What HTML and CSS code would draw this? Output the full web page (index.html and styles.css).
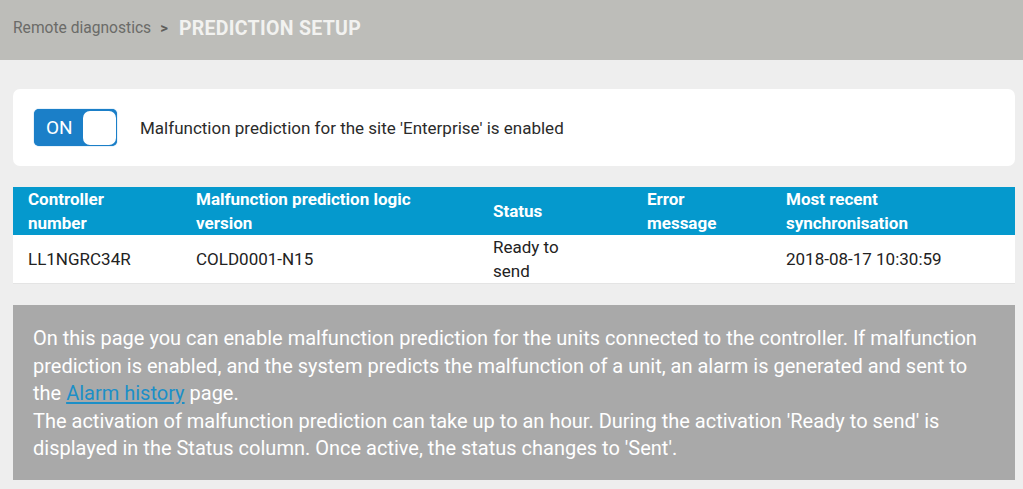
FILE: index.html
```html
<!DOCTYPE html>
<html>
<head>
<meta charset="utf-8">
<link rel="stylesheet" href="styles.css">
</head>
<body>
<header class="topbar">
  <span class="crumb">Remote diagnostics</span>
  <span class="sep">&gt;</span>
  <span class="title">PREDICTION SETUP</span>
</header>
<main class="content">
  <section class="card">
    <div class="toggle">
      <span class="toggle-label">ON</span>
      <span class="knob"></span>
    </div>
    <span class="card-text">Malfunction prediction for the site 'Enterprise' is enabled</span>
  </section>
  <table class="grid">
    <thead>
      <tr>
        <th class="c1">Controller<br>number</th>
        <th class="c2">Malfunction prediction logic<br>version</th>
        <th class="c3">Status</th>
        <th class="c4">Error<br>message</th>
        <th class="c5">Most recent<br>synchronisation</th>
      </tr>
    </thead>
    <tbody>
      <tr>
        <td>LL1NGRC34R</td>
        <td>COLD0001-N15</td>
        <td>Ready to<br>send</td>
        <td></td>
        <td>2018-08-17 10:30:59</td>
      </tr>
    </tbody>
  </table>
  <section class="info">
    <p>On this page you can enable malfunction prediction for the units connected to the controller. If malfunction prediction is enabled, and the system predicts the malfunction of a unit, an alarm is generated and sent to the <a href="#">Alarm history</a> page.<br>The activation of malfunction prediction can take up to an hour. During the activation 'Ready to send' is displayed in the Status column. Once active, the status changes to 'Sent'.</p>
  </section>
</main>
</body>
</html>
```
FILE: styles.css
```css
* { box-sizing: border-box; }
html, body { margin: 0; padding: 0; }
body {
  background: #eeeeee;
  font-family: Roboto, "Liberation Sans", sans-serif;
  color: #333;
  width: 1023px;
  height: 489px;
  overflow: hidden;
}
.topbar {
  height: 60px;
  background: #bdbdb9;
  display: flex;
  align-items: center;
  padding-left: 13px;
  padding-bottom: 4px;
}
.crumb { font-size: 15.6px; color: #6b6b68; }
.sep { font-size: 15px; font-weight: 700; color: #5e5e5b; margin: 0 11px 0 9px; }
.title { font-size: 19.5px; font-weight: 700; color: #f2f2f0; letter-spacing: 0.3px; }
.content {
  padding: 29px 8px 0 13px;
  display: flex;
  flex-direction: column;
}
.card {
  background: #fff;
  border-radius: 7px;
  height: 77px;
  display: flex;
  align-items: center;
  padding-left: 21px;
  width: 1002px;
}
.toggle {
  width: 83px;
  height: 37px;
  background: #1b7fc8;
  border-radius: 5px;
  display: flex;
  align-items: center;
  justify-content: space-between;
  padding: 1px 1px 1px 12px;
  box-shadow: 0 0 1px #1b7fc8;
}
.toggle-label { color: #fff; font-size: 19px; }
.knob {
  width: 33px;
  height: 34px;
  background: #fff;
  border-radius: 7px;
}
.card-text { margin-left: 23px; font-size: 17px; color: #2b2b2b; }
.grid {
  margin-top: 21px;
  width: 1002px;
  border-collapse: collapse;
  font-size: 17px;
  table-layout: fixed;
}
.grid th {
  background: #0599cd;
  color: #fff;
  font-weight: 700;
  text-align: left;
  line-height: 24px;
  height: 48px;
  padding: 0 0 0 15px;
  vertical-align: middle;
}
.grid th.c1 { width: 168px; }
.grid th.c2 { width: 297px; }
.grid th.c3 { width: 154px; }
.grid th.c4 { width: 139px; }
.grid td {
  background: #fff;
  color: #222;
  line-height: 24px;
  height: 48px;
  padding: 0 0 0 15px;
  vertical-align: middle;
  border-bottom: 1px solid #e4e4e4;
}
.info {
  margin-top: 21px;
  width: 1002px;
  height: 175px;
  background: #a9a9a9;
  padding: 20px 20px 0 20px;
}
.info p {
  margin: 0;
  color: #fff;
  font-size: 20px;
  line-height: 27.5px;
}
.info a { color: #1c8fc7; text-decoration: underline; text-underline-offset: 2px; }
```
